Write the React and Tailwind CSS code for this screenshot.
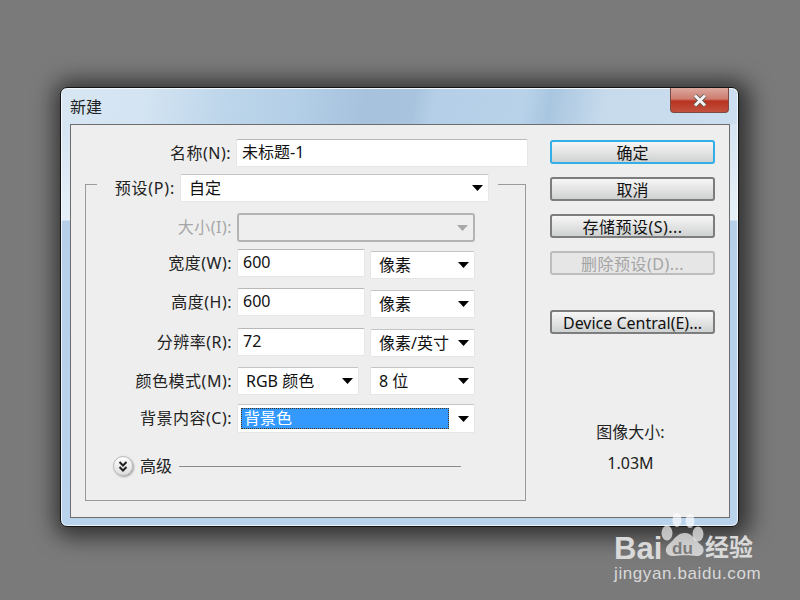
import React from "react";

const fontCls = "font-['Noto_Sans','Noto_Sans_CJK_SC',sans-serif]";

function Caret({ muted }) {
  return (
    <svg width="11" height="6" viewBox="0 0 11 6" className="shrink-0">
      <path d="M0 0H11L5.5 6Z" fill={muted ? "#a8a8a8" : "#000"} />
    </svg>
  );
}

function Label({ children, muted }) {
  return (
    <div className={`w-[151px] h-[27px] pr-[5px] text-right leading-[29px] tracking-[0.5px] whitespace-nowrap ${muted ? "text-[#a6a6a6]" : "text-[#222]"}`}>
      {children}
    </div>
  );
}

function Input({ value, className }) {
  return (
    <div className={`h-[28px] pl-[5px] bg-white rounded-[2px] border border-[#e6e6e6] border-t-[#b8b8b8] leading-[24px] text-[#111] ${className}`}>
      {value}
    </div>
  );
}

function Select({ value, className }) {
  return (
    <div className={`h-[28px] pl-[8px] pr-[5px] bg-white rounded-[2px] border border-[#e6e6e6] border-t-[#c4c4c4] flex items-center justify-between text-[#111] whitespace-nowrap ${className}`}>
      <span className="leading-[29px]">{value}</span>
      <Caret />
    </div>
  );
}

function Button({ children, primary, disabled, wide }) {
  let tone = "border-[#7d7d7d] text-[#111]";
  if (primary) tone = "border-[#33aee6] text-[#111]";
  if (disabled) tone = "border-[#bdbdbd] text-[#a4a4a4]";
  return (
    <button className={`w-[165px] h-[24px] pt-[1px] rounded-[3px] border-2 leading-[21px] whitespace-nowrap ${wide ? "tracking-[0.5px]" : ""} ${tone} ${disabled ? "bg-[#e6e6e6]" : "bg-linear-to-b from-[#f6f6f6] via-[#e4e4e4] via-50% to-[#cfd2d2]"}`}>
      {children}
    </button>
  );
}

function Watermark() {
  return (
    <div className="absolute left-[612px] top-[510px] w-[150px] h-[75px] text-[#d9d9d9] font-['Liberation_Sans',sans-serif]">
      <svg width="70" height="54" viewBox="0 0 70 54" className="absolute left-[44px] top-0">
        <g fill="#fff" fillOpacity="0.66">
          <ellipse cx="21" cy="10" rx="4.5" ry="7" />
          <ellipse cx="34" cy="11" rx="4.5" ry="7" />
          <ellipse cx="11" cy="23" rx="5.5" ry="7.5" />
          <ellipse cx="42" cy="24" rx="5.5" ry="7.5" />
          <path d="M29 23C36 23 38 29 44 34C51 39 47 47 40 46C34 45 24 45 18 46C10 47 7 39 13 34C19 29 21 23 29 23Z" />
        </g>
      </svg>
      <span className="absolute left-[2px] top-[21px] text-[31px] leading-[36px] font-bold">Bai</span>
      <span className="absolute left-[60px] top-[30px] text-[17px] leading-[18px] font-bold text-[#7a7a7a]">du</span>
      <span className={`absolute left-[93px] top-[21px] text-[24px] leading-[32px] font-bold ${fontCls}`}>经验</span>
      <span className="absolute left-[2px] top-[54px] text-[17px] leading-[20px] tracking-[0.6px]">jingyan.baidu.com</span>
    </div>
  );
}

export default function App() {
  return (
    <div className={`relative w-[800px] h-[600px] overflow-hidden bg-[#7a7a7a] text-[16px] ${fontCls}`}>
      {/* dialog window */}
      <div className="absolute left-[60px] top-[87px] w-[679px] h-[440px] rounded-[7px] border border-[#141414] shadow-[3px_2px_22px_8px_rgba(0,0,0,0.6),inset_0_0_0_1px_rgba(255,255,255,0.75)] bg-[linear-gradient(180deg,#cfe0ef_0px,#e6f0f9_132px,#b6d0ea_133px,#b9d3ec_100%)] flex flex-col">
        {/* title bar */}
        <div className="relative h-[35px] mx-px mt-px rounded-t-[6px] flex items-center pl-[8px] bg-[linear-gradient(100deg,#d8e6f3_0%,#d4e4f2_12%,#bcd5ea_25%,#b3cee7_35%,#a6c2dc_45%,#a8c3dd_52%,#b5cfe8_55%,#b8d2ea_68%,#a9c6e0_72%,#c6daec_80%,#ccdeef_100%)]">
          <span className="text-[#222] leading-[30px]">新建</span>
          <div className="absolute right-[8px] -top-px w-[59px] h-[25px] rounded-b-[4px] border border-t-0 border-[#7a4a44] flex items-center justify-center bg-[linear-gradient(180deg,#dba89e_0%,#cf7d70_45%,#b8331f_55%,#c2513e_100%)]">
            <svg width="16" height="13" viewBox="0 0 16 13">
              <path d="M3 1.5L13 11.5M13 1.5L3 11.5" stroke="#555" strokeWidth="4.5" />
              <path d="M3 1.5L13 11.5M13 1.5L3 11.5" stroke="#f4f4f4" strokeWidth="3" />
            </svg>
          </div>
        </div>

        {/* client area */}
        <div className="ml-[9px] mr-[8px] h-[394px] border border-[#6d6d6d] bg-[#eeeeee] flex">
          {/* left column */}
          <div className="w-[479px] flex flex-col pl-[14px] pt-[14px]">
            <div className="flex">
              <Label>名称(N):</Label>
              <Input value="未标题-1" className="w-[292px]" />
            </div>

            <div className="mt-[17px] w-[441px] h-[317px] border border-[#9a9a9a] flex flex-col">
              {/* preset row sits on the group border */}
              <div className="-mt-[11px] ml-[11px] w-[401px] flex bg-[#eeeeee]">
                <div className="w-[83px] h-[27px] pr-[5px] text-right leading-[29px] tracking-[0.8px] whitespace-nowrap text-[#222]">预设(P):</div>
                <Select value="自定" className="w-[309px]" />
              </div>

              <div className="mt-[11px] flex">
                <Label muted>大小(I):</Label>
                <div className="w-[238px] h-[29px] rounded-[3px] border-2 border-[#b4b4b4] bg-[#eeeeee] flex items-center justify-end pr-[5px]">
                  <Caret muted />
                </div>
              </div>

              <div className="mt-[7px] flex">
                <Label>宽度(W):</Label>
                <Input value="600" className="w-[128px]" />
                <Select value="像素" className="w-[105px] ml-[5px] mt-[2px]" />
              </div>

              <div className="mt-[9px] flex">
                <Label>高度(H):</Label>
                <Input value="600" className="w-[128px]" />
                <Select value="像素" className="w-[105px] ml-[5px] mt-[2px]" />
              </div>

              <div className="mt-[10px] flex">
                <Label>分辨率(R):</Label>
                <Input value="72" className="w-[128px]" />
                <Select value="像素/英寸" className="w-[105px] ml-[5px] mt-[1px]" />
              </div>

              <div className="mt-[10px] flex">
                <Label>颜色模式(M):</Label>
                <Select value="RGB 颜色" className="w-[122px]" />
                <Select value="8 位" className="w-[105px] ml-[11px]" />
              </div>

              <div className="mt-[9px] flex">
                <Label>背景内容(C):</Label>
                <div className="w-[238px] h-[29px] bg-white rounded-[2px] border border-[#e6e6e6] border-t-[#c4c4c4] flex items-center justify-between pl-[3px] pr-[5px]">
                  <div className="w-[208px] h-[21px] bg-[#3399ff] border border-dotted border-[#4a3210] text-white leading-[18px] pl-[2px]">背景色</div>
                  <Caret />
                </div>
              </div>

              <div className="mt-[21px] ml-[27px] flex items-center">
                <div className="w-[20px] h-[20px] rounded-full border border-[#b9b9b9] bg-linear-to-b from-white to-[#dedede] shadow-[1px_1px_2px_rgba(0,0,0,0.35)] flex items-center justify-center">
                  <svg width="10" height="11" viewBox="0 0 10 11">
                    <path d="M1.5 1L5 4.5L8.5 1M1.5 6L5 9.5L8.5 6" fill="none" stroke="#222" strokeWidth="2" />
                  </svg>
                </div>
                <span className="ml-[7px] text-[#222] whitespace-nowrap">高级</span>
                <div className="ml-[7px] w-[282px] h-px bg-[#8a8a8a]" />
              </div>
            </div>
          </div>

          {/* right column */}
          <div className="flex-1 flex flex-col pt-[15px]">
            <div className="flex flex-col gap-[13px]">
              <Button primary>确定</Button>
              <Button>取消</Button>
              <Button wide>存储预设(S)...</Button>
              <Button wide disabled>删除预设(D)...</Button>
            </div>
            <div className="mt-[35px]">
              <Button>Device Central(E)...</Button>
            </div>
            <div className="mt-[85px] w-[161px] text-center text-[#222] leading-[24px]">图像大小:</div>
            <div className="mt-[7px] w-[161px] text-center text-[#222] leading-[24px]">1.03M</div>
          </div>
        </div>
      </div>

      <Watermark />
    </div>
  );
}
